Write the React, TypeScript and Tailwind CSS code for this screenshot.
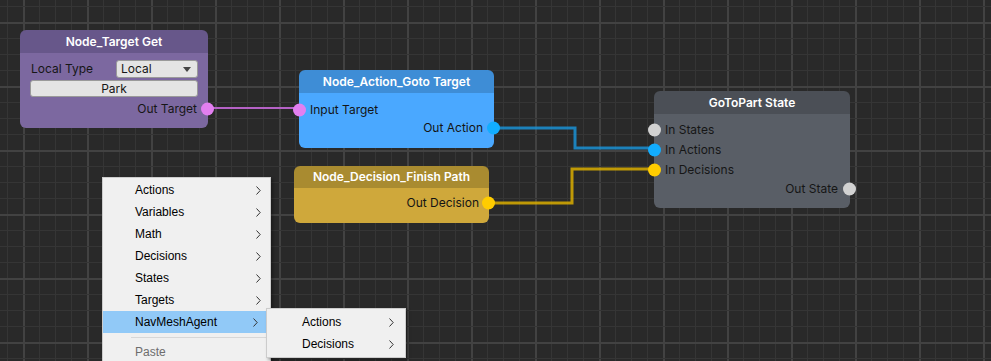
import React from "react";

const W = 991;
const H = 361;

type PortProps = { side: "left" | "right"; color: string };

const Port: React.FC<PortProps> = ({ side, color }) => (
  <span
    className={`absolute top-1/2 -translate-y-1/2 w-[13px] h-[13px] rounded-full ${
      side === "left" ? "-left-[6px]" : "-right-[6px]"
    }`}
    style={{ backgroundColor: color }}
  />
);

const GridAndWires = () => {
  const xs: number[] = [];
  for (let x = 7; x < W; x += 16) xs.push(x);
  const ys: number[] = [];
  for (let y = 6; y < H; y += 16) ys.push(y);

  return (
    <svg className="absolute inset-0" width={W} height={H} shapeRendering="crispEdges">
      {xs.map((x) => {
        const major = (x - 23) % 64 === 0;
        return (
          <rect
            key={"x" + x}
            x={x}
            y={0}
            width={major ? 2 : 1}
            height={H}
            fill={major ? "#424242" : "#353535"}
          />
        );
      })}
      {ys.map((y) => {
        const major = (y - 22) % 64 === 0;
        return (
          <rect
            key={"y" + y}
            x={0}
            y={y}
            width={W}
            height={major ? 2 : 1}
            fill={major ? "#424242" : "#353535"}
          />
        );
      })}
      {/* wires */}
      <path d="M207 107.5 H300" stroke="#b562c6" strokeWidth={2} fill="none" />
      <path
        d="M493 128 H575 V148 H656"
        stroke="#1a90d4"
        strokeOpacity={0.85}
        strokeWidth={3}
        fill="none"
        shapeRendering="auto"
      />
      <path
        d="M487 203 H572 V169 H656"
        stroke="#d9ad00"
        strokeOpacity={0.85}
        strokeWidth={3}
        fill="none"
        shapeRendering="auto"
      />
    </svg>
  );
};

const Chevron = () => (
  <svg width="5" height="9" viewBox="0 0 5 9" className="shrink-0">
    <path d="M0.5 0.5 L4.2 4.5 L0.5 8.5" stroke="#333" strokeWidth="1" fill="none" />
  </svg>
);

const menuItems = ["Actions", "Variables", "Math", "Decisions", "States", "Targets"];

export default function App() {
  return (
    <div
      className="relative w-[991px] h-[361px] overflow-hidden bg-[#292929]"
      style={{ fontFamily: "Inter, 'Noto Sans', sans-serif" }}
    >
      <GridAndWires />

      {/* Node_Target Get */}
      <div className="absolute left-[20px] top-[30px] w-[188px] text-[12px]">
        <div className="h-[23px] rounded-t-[6px] bg-[#67578a] flex items-center justify-center text-white font-semibold">
          Node_Target Get
        </div>
        <div className="rounded-b-[6px] bg-[#7c68a0] px-[10px] pt-[7px] pb-[10px] text-[#161616]">
          <div className="h-[18px] flex items-center justify-between">
            <span className="pl-[1px]">Local Type</span>
            <div className="w-[82px] h-[18px] rounded-[3px] bg-[#e4e4e4] border border-[#9a9a9a] flex items-center justify-between pl-[4px] pr-[6px]">
              <span>Local</span>
              <svg width="8" height="5" viewBox="0 0 8 5">
                <path d="M0 0 H8 L4 5 Z" fill="#444" />
              </svg>
            </div>
          </div>
          <div className="mt-[2px] h-[17px] rounded-[3px] bg-[#e4e4e4] border border-[#9a9a9a] flex items-center justify-center">
            Park
          </div>
          <div className="relative h-[18px] mt-[3px] -mr-[10px] pr-[11px] flex items-center justify-end">
            Out Target
            <Port side="right" color="#e27ff0" />
          </div>
        </div>
      </div>

      {/* Node_Action_Goto Target */}
      <div className="absolute left-[299px] top-[70px] w-[195px] text-[12px]">
        <div className="h-[23px] rounded-t-[6px] bg-[#3e8dd6] flex items-center justify-center text-white font-semibold">
          Node_Action_Goto Target
        </div>
        <div className="h-[55px] rounded-b-[6px] bg-[#4aa8ff] pt-[8px] text-[#141414]">
          <div className="relative h-[18px] pl-[11px] flex items-center">
            Input Target
            <Port side="left" color="#e27ff0" />
          </div>
          <div className="relative h-[18px] pr-[11px] flex items-center justify-end">
            Out Action
            <Port side="right" color="#12adff" />
          </div>
        </div>
      </div>

      {/* Node_Decision_Finish Path */}
      <div className="absolute left-[294px] top-[166px] w-[195px] text-[12px]">
        <div className="h-[22px] rounded-t-[6px] bg-[#a98b30] flex items-center justify-center text-white font-semibold">
          Node_Decision_Finish Path
        </div>
        <div className="h-[35px] rounded-b-[6px] bg-[#cfa83b] pt-[6px] text-[#141414]">
          <div className="relative h-[18px] pr-[10px] flex items-center justify-end">
            Out Decision
            <Port side="right" color="#ffcc00" />
          </div>
        </div>
      </div>

      {/* GoToPart State */}
      <div className="absolute left-[654px] top-[91px] w-[196px] text-[12px]">
        <div className="h-[23px] rounded-t-[6px] bg-[#4b4f56] flex items-center justify-center text-white font-semibold">
          GoToPart State
        </div>
        <div className="h-[94px] rounded-b-[6px] bg-[#595e66] pt-[6px] text-[#161616]">
          {[
            ["In States", "#d2d2d2"],
            ["In Actions", "#12adff"],
            ["In Decisions", "#ffcc00"],
          ].map(([label, color]) => (
            <div key={label} className="relative h-[20px] pl-[11px] flex items-center">
              {label}
              <Port side="left" color={color} />
            </div>
          ))}
          <div className="relative h-[18px] pr-[12px] flex items-center justify-end">
            Out State
            <Port side="right" color="#d2d2d2" />
          </div>
        </div>
      </div>

      {/* Context menu */}
      <div
        className="absolute left-[102px] top-[177px] w-[169px] bg-[#f0f0f0] border border-[#cccccc] py-[1px] text-[12px] text-black shadow-[2px_2px_3px_rgba(0,0,0,0.35)]"
        style={{ fontFamily: "'Liberation Sans', Arial, sans-serif" }}
      >
        {menuItems.map((item) => (
          <div key={item} className="h-[22px] flex items-center pl-[32px] pr-[9px]">
            <span className="flex-1">{item}</span>
            <Chevron />
          </div>
        ))}
        <div className="h-[22px] flex items-center pl-[32px] pr-[9px] bg-[#91c9f7] mr-[3px]">
          <span className="flex-1">NavMeshAgent</span>
          <Chevron />
        </div>
        <div className="h-[8px] flex items-center pl-[28px]">
          <div className="h-px w-full bg-[#d7d7d7]" />
        </div>
        <div className="h-[22px] flex items-center pl-[32px] text-[#6d6d6d]">Paste</div>
      </div>

      {/* Submenu */}
      <div
        className="absolute left-[266px] top-[308px] w-[140px] bg-[#f0f0f0] border border-[#cccccc] py-[2px] text-[12px] text-black shadow-[2px_2px_3px_rgba(0,0,0,0.35)]"
        style={{ fontFamily: "'Liberation Sans', Arial, sans-serif" }}
      >
        {["Actions", "Decisions"].map((item) => (
          <div key={item} className="h-[22px] flex items-center pl-[35px] pr-[11px]">
            <span className="flex-1">{item}</span>
            <Chevron />
          </div>
        ))}
      </div>
    </div>
  );
}
